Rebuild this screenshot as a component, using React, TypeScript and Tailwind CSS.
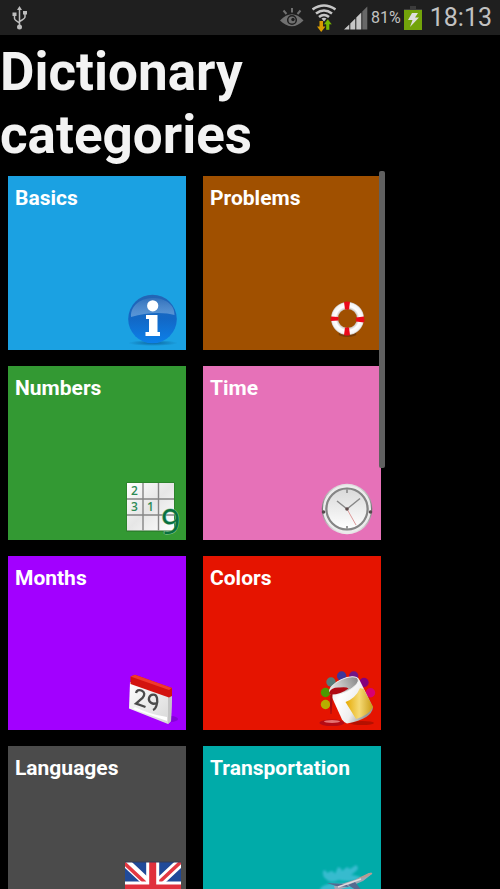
import React from "react";

const UsbIcon = () => (
  <svg className="w-4 h-6" viewBox="0 0 16 24" fill="none" stroke="#bdbdbd" strokeWidth="1.5">
    <path d="M7.500 3v17M2.500 9v3.500q0 1.500 5 4.500M13 7v4q0 1.500-5.500 4.500" />
    <path d="M7.500 0l2.500 4H5zM.5 6.500h4v3.500h-4zM11 5h4v3.500h-4z" fill="#bdbdbd" stroke="none" />
    <circle cx="7.500" cy="21" r="2.500" fill="#bdbdbd" stroke="none" />
  </svg>
);

const EyeIcon = () => (
  <svg className="w-6 h-5" viewBox="0 0 24 20" fill="none" stroke="#707070">
    <path d="M12 0v4.500M3.500 2.500 6.500 6M20.500 2.500 17.500 6" strokeWidth="2" />
    <path d="M0 12.500Q12 0 23.500 12.500 12 24 0 12.500Z" fill="#707070" stroke="none" />
    <circle cx="12" cy="12" r="4.300" stroke="#1f1f1f" strokeWidth="1.500" />
    <circle cx="13" cy="11.500" r="1.700" fill="#1f1f1f" stroke="none" />
  </svg>
);

const WifiIcon = () => (
  <svg className="w-6 h-7" viewBox="0 0 24 28" fill="none">
    <g stroke="#c6c6c6" strokeWidth="2.600">
      <path d="M.5 5.500Q12-2.500 23.500 5.500" />
      <path d="M4 9.500q8-6 16 0" />
      <path d="M7 13q5-4 10 0" />
    </g>
    <path d="M9.500 14.500q2.500-1.500 5 0L12 17.500z" fill="#c6c6c6" />
    <path d="M7.500 17h3.500v5.500h2.500L9.200 28 5 22.500h2.500z" fill="#d89b00" />
    <path d="M14 26h3.500v-5.500H20L15.800 15l-4.300 5.500H14z" fill="#76b900" stroke="#1f1f1f" strokeWidth=".4" />
  </svg>
);

const SignalIcon = () => (
  <svg className="w-6 h-6" viewBox="0 0 24 24">
    <path d="M0 23.500 5.300 18.500v5zM6.300 17.500l5-5v11h-5zM12.300 11.500l5-5v17h-5z" fill="#c6c6c6" />
    <path d="M18.300 5.500 23.300.5v23h-5z" fill="#686868" />
  </svg>
);

const BatteryIcon = () => (
  <svg className="w-[18px] h-6" viewBox="0 0 18 24">
    <path d="M6 0h6v3h6v2H0V3h6z" fill="#3c3c3c" />
    <path d="M0 4h18v20H0z" fill="#72a30a" />
    <path d="M8 7h6l-3 4.500h4L6 21l2.500-7H4z" fill="#dedede" />
  </svg>
);

const InfoIcon = () => (
  <>
    <defs>
      <linearGradient id="infoBall" x2="0" y2="1">
        <stop stopColor="#2465b4" />
        <stop offset=".5" stopColor="#1268c6" />
        <stop offset="1" stopColor="#0c80ea" />
      </linearGradient>
      <linearGradient id="infoShine" x2="0" y2="1">
        <stop stopColor="#3070bb" />
        <stop offset="1" stopColor="#7caee2" stopOpacity=".65" />
      </linearGradient>
      <radialGradient id="infoShadow">
        <stop stopColor="#064f84" stopOpacity=".7" />
        <stop offset="1" stopColor="#064f84" stopOpacity="0" />
      </radialGradient>
    </defs>
    <ellipse cx="28" cy="53" rx="25" ry="3" fill="url(#infoShadow)" />
    <circle cx="27.500" cy="29" r="24.300" fill="url(#infoBall)" />
    <path d="M6 27C5 2 50 2 49.500 25 40 22 22 22 6 27Z" fill="url(#infoShine)" />
    <circle cx="27.700" cy="15.800" r="5.600" fill="#fff" />
    <path d="M21 25h11.500v17H35v4H20.500v-4H24V29h-3z" fill="#fff" />
  </>
);

const BuoyIcon = () => (
  <>
    <defs>
      <radialGradient id="buoyRing" gradientUnits="userSpaceOnUse" cx="27.500" cy="28.500" r="17">
        <stop offset=".56" stopColor="#c9c3be" />
        <stop offset=".7" stopColor="#fff" />
        <stop offset=".9" stopColor="#f5f5f5" />
        <stop offset="1" stopColor="#b8b0aa" />
      </radialGradient>
    </defs>
    <ellipse cx="27.500" cy="44" rx="9" ry="3" fill="#5b2f0a" opacity=".6" />
    <circle cx="27.500" cy="28.500" r="13" fill="none" stroke="url(#buoyRing)" strokeWidth="7" />
    <path d="M24 12q3-1.200 6 0l-1 7.500h-4zM24 45q3 1.200 6 0l-1-7.500h-4zM11 26.500q-.8 2 0 4.500l7.500-.5v-3.500zM44 26.500q.8 3 0 6l-8-1v-4z" fill="#ea0a1a" />
  </>
);

const NumbersIcon = () => (
  <>
    <defs>
      <linearGradient id="cells" x2="1" y2="1">
        <stop stopColor="#fff" />
        <stop offset=".5" stopColor="#e6e6e6" />
        <stop offset="1" stopColor="#fff" />
      </linearGradient>
    </defs>
    <path d="M1.500 2.500h48v49h-48z" fill="#276f27" />
    <path d="M2 3h47v47.500H2z" fill="url(#cells)" />
    <path d="M18 3v47.500M33.500 3v47.500M2 19h47M2 35h47" stroke="#858585" strokeWidth="1.400" />
    <g fill="#2d8a55" fontFamily="Open Sans, sans-serif" fontSize="12" fontWeight="600">
      <text x="6" y="15">2</text>
      <text x="6" y="31">3</text>
      <text x="22" y="31">1</text>
    </g>
    <text
      x="36"
      y="54"
      fill="#087040"
      stroke="#8cc49f"
      strokeWidth="1"
      paintOrder="stroke"
      fontFamily="Open Sans, sans-serif"
      fontSize="34"
      fontWeight="500"
    >
      9
    </text>
  </>
);

const ClockIcon = () => (
  <>
    <defs>
      <linearGradient id="clockRim" x2="0" y2="1">
        <stop stopColor="#e4e4e4" />
        <stop offset=".5" stopColor="#777" />
        <stop offset="1" stopColor="#eee" />
      </linearGradient>
      <linearGradient id="clockFace" x2="0" y2="1">
        <stop stopColor="#d9d9d9" />
        <stop offset="1" stopColor="#fff" />
      </linearGradient>
    </defs>
    <circle cx="27" cy="29" r="25.300" fill="url(#clockRim)" />
    <circle cx="27" cy="29" r="22.800" fill="none" stroke="#ececec" strokeWidth="2.500" />
    <circle cx="27" cy="29" r="20.500" fill="url(#clockFace)" stroke="#858585" strokeWidth="2" />
    <circle cx="3.500" cy="32" r="1.800" fill="#554a4d" />
    <circle cx="50.500" cy="32" r="1.800" fill="#554a4d" />
    <path d="M27 9v4M27 46v3" stroke="#999" strokeWidth="2" />
    <path d="M27 29 17 21M27 29l13-10.500" stroke="#888" strokeWidth="1.500" />
    <path d="m27 29 9 16" stroke="#d99" />
    <circle cx="27" cy="29" r="1.800" fill="#5d4a4a" />
  </>
);

const CalendarIcon = () => (
  <>
    <defs>
      <linearGradient id="page" x2="1" y2="1">
        <stop stopColor="#fff" />
        <stop offset="1" stopColor="#d6d6d6" />
      </linearGradient>
    </defs>
    <ellipse cx="46" cy="49" rx="7" ry="3" fill="#5b00a0" opacity=".4" />
    <path d="M5 12 47 25l-1 26-3 3L4 38.500z" fill="url(#page)" />
    <path d="M43 26v28l3-3 1-26z" fill="#c4c4c4" />
    <path d="M10 37q13 7 32 10v4L8 39z" fill="#fff" />
    <path d="M5.500 6.500 10 4.800 47 18v8l-3 1.500L5.500 14z" fill="#d3130f" />
    <path d="M5.500 6.500 10 4.800 47 18l-3 2z" fill="#ef3a2c" />
    <g fill="none" stroke="#4a4a4a" strokeWidth="2.300">
      <path d="M11 23q1-4 5.500-2.500 5 2.500 1 7.500L11 33.500l9.500 3.500" />
      <path d="M31 33c-3 2-8-1-7-5s7-5 8 0-1 11-4 12" />
    </g>
  </>
);

const PaintIcon = () => (
  <>
    <defs>
      <linearGradient id="bucket" x2="1" y2=".5">
        <stop stopColor="#ddd" />
        <stop offset=".35" stopColor="#fff" />
        <stop offset=".7" stopColor="#eee" />
        <stop offset="1" stopColor="#999" />
      </linearGradient>
      <linearGradient id="label" x2="1" y2="0">
        <stop stopColor="#e6a900" />
        <stop offset=".5" stopColor="#f5da75" />
        <stop offset="1" stopColor="#c99a13" />
      </linearGradient>
      <linearGradient id="inside" x2="1" y2="0">
        <stop stopColor="#eee" />
        <stop offset="1" stopColor="#888" />
      </linearGradient>
    </defs>
    <circle cx="5.500" cy="34.500" r="4.700" fill="#b7ae00" />
    <circle cx="5.500" cy="22.500" r="4.700" fill="#4b9900" />
    <circle cx="11" cy="12" r="4.700" fill="#577c78" />
    <circle cx="21.700" cy="6" r="4.700" fill="#3f3699" />
    <circle cx="33.700" cy="6" r="4.700" fill="#711685" />
    <circle cx="44" cy="12.500" r="4.700" fill="#85007c" />
    <circle cx="50.500" cy="22.800" r="4.700" fill="#d70072" />
    <ellipse cx="42" cy="53" rx="12" ry="2" fill="#850b00" opacity=".5" />
    <ellipse cx="12" cy="52.800" rx="12.500" ry="3.300" fill="#b50b14" />
    <ellipse cx="12" cy="51.500" rx="8" ry="1.500" fill="#e67272" />
    <path d="M10 23 37 8q1.500 0 2.500 2L53 37q-1 12-26 16.500-3-1-5-4z" fill="url(#bucket)" />
    <path d="M25.500 32Q36 28 40 18l3.500 1L53 37q-4 8-17 12z" fill="url(#label)" />
    <ellipse cx="24" cy="15.500" rx="15.500" ry="6.500" transform="rotate(-25 24 15.500)" fill="url(#inside)" stroke="#eee" />
    <path d="M9.500 22q2-5 10-4.500 7-1 9 1-8 6-17 6-3-1-2-2.500z" fill="#b00912" />
    <path d="M10.500 24q-1 11 0 20h1q1-9 1-20z" fill="#a50d10" />
  </>
);

const FlagIcon = () => (
  <>
    <defs>
      <clipPath id="flagClip">
        <path d="M0 2h56v52H0z" />
      </clipPath>
    </defs>
    <g clipPath="url(#flagClip)">
      <path d="M0 2h56v52H0z" fill="#204a99" />
      <path d="m-4-2 64 60M60-2-4 58" stroke="#fff" strokeWidth="9" />
      <path d="m-4 0 32 30M60-2 28 28M-4 58l32-30M60 56 28 26" stroke="#e23742" strokeWidth="3.500" />
      <path d="M27.700 2v52M0 28h56" stroke="#fff" strokeWidth="13" />
      <path d="M27.700 2v52M0 28h56" stroke="#e0303c" strokeWidth="7" />
    </g>
    <path d="M0 2h56" stroke="#333c58" />
  </>
);

const PlaneIcon = () => (
  <>
    <defs>
      <filter id="soft">
        <feGaussianBlur stdDeviation="1" />
      </filter>
    </defs>
    <g fill="#54c5e3" opacity=".65" filter="url(#soft)">
      <path d="M3 11q3-2 4 2l4-2q3 0 4 3l3-7q4 1 4 4l5-4 3 2 6-4q4 3 0 6l-6 5-14 5q-7 2-10-2-4-3-3-8z" />
      <ellipse cx="28" cy="18" rx="13" ry="3" />
      <ellipse cx="18" cy="30" rx="18" ry="7" />
    </g>
    <path d="M14 26q18-5 28-9l7-4q4-1 3 1l-9 7q-14 7-28 9z" fill="#9fa6b5" />
    <path d="m36 19 13-6q4-1 3 1l-6 3z" fill="#b99b90" />
    <path d="m7 23 19 1 3 3-13-1zM35 22l8 10h-4L28 25z" fill="#566a90" />
    <path d="m18 27 23-8" stroke="#e0d9dc" strokeWidth="1.500" />
  </>
);

const categories = [
  { name: "Basics", color: "bg-[#1ba1e2]", icon: <InfoIcon /> },
  { name: "Problems", color: "bg-[#a05000]", icon: <BuoyIcon /> },
  { name: "Numbers", color: "bg-[#339933]", icon: <NumbersIcon /> },
  { name: "Time", color: "bg-[#e671b8]", icon: <ClockIcon /> },
  { name: "Months", color: "bg-[#a200ff]", icon: <CalendarIcon /> },
  { name: "Colors", color: "bg-[#e51400]", icon: <PaintIcon /> },
  { name: "Languages", color: "bg-[#4b4b4b]", icon: <FlagIcon /> },
  { name: "Transportation", color: "bg-[#00aba9]", icon: <PlaneIcon /> },
];

const StatusBar = () => (
  <header className="flex shrink-0 items-center justify-between h-[35px] pl-3 pr-2 bg-[#1f1f1f] text-[#c2c2c2]">
    <UsbIcon />
    <div className="flex items-center gap-2">
      <EyeIcon />
      <WifiIcon />
      <div className="flex items-center gap-[3px]">
        <SignalIcon />
        <span className="text-base">81%</span>
        <BatteryIcon />
      </div>
      <time className="text-[25px] leading-8">18:13</time>
    </div>
  </header>
);

const App = () => {
  return (
    <div className="flex flex-col h-screen overflow-hidden bg-black font-['Roboto',sans-serif]">
      <StatusBar />
      <h1 className="shrink-0 pt-1.5 text-[53px] leading-[63px] font-bold text-[#f3f3f3]">
        Dictionary
        <br />
        categories
      </h1>
      <main className="relative flex-1 min-h-0 w-[77%] mt-1 overflow-hidden">
        <div className="grid grid-cols-2 gap-x-[17px] gap-y-4 pt-[5px] pl-2 pr-1">
          {categories.map((category) => (
            <button
              key={category.name}
              type="button"
              className={`flex flex-col justify-between h-[174px] pt-2 pb-1 pl-[7px] pr-[5px] text-left text-white ${category.color}`}
            >
              <span className="text-[21px] leading-7 font-bold">{category.name}</span>
              <svg className="self-end w-14 h-14 overflow-visible" viewBox="0 0 56 56" aria-hidden="true">
                {category.icon}
              </svg>
            </button>
          ))}
        </div>
        {/* Scroll thumb */}
        <div className="absolute top-0 right-0 w-1.5 h-[297px] rounded-xs bg-[#606060]" />
      </main>
    </div>
  );
};

export default App;
